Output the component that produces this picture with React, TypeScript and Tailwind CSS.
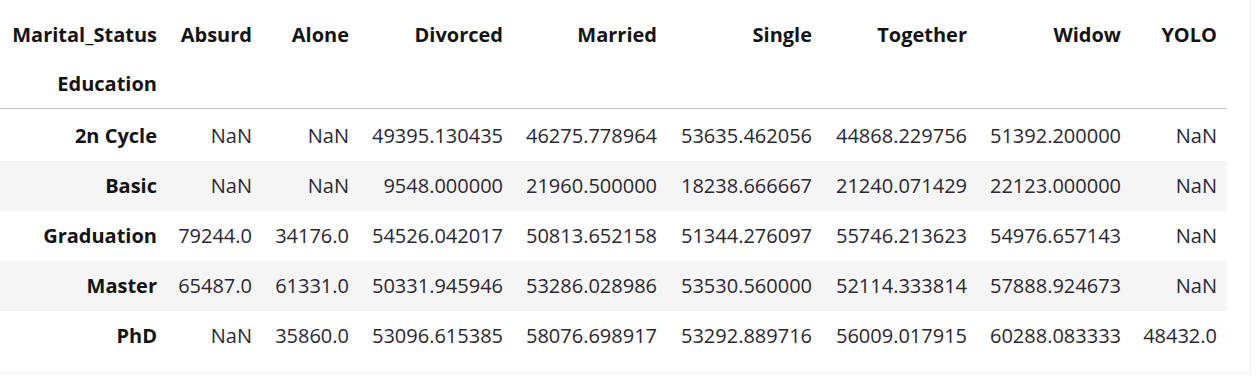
import React from "react";

const cols = ["Absurd", "Alone", "Divorced", "Married", "Single", "Together", "Widow", "YOLO"];

const rows: [string, string[]][] = [
  ["2n Cycle", ["NaN", "NaN", "49395.130435", "46275.778964", "53635.462056", "44868.229756", "51392.200000", "NaN"]],
  ["Basic", ["NaN", "NaN", "9548.000000", "21960.500000", "18238.666667", "21240.071429", "22123.000000", "NaN"]],
  ["Graduation", ["79244.0", "34176.0", "54526.042017", "50813.652158", "51344.276097", "55746.213623", "54976.657143", "NaN"]],
  ["Master", ["65487.0", "61331.0", "50331.945946", "53286.028986", "53530.560000", "52114.333814", "57888.924673", "NaN"]],
  ["PhD", ["NaN", "35860.0", "53096.615385", "58076.698917", "53292.889716", "56009.017915", "60288.083333", "48432.0"]],
];

const grid = "grid grid-cols-[167px_95px_97px_154px_154px_155px_155px_154px_96px] w-[1227px]";

export default function App() {
  return (
    <div
      className="w-[1251px] h-[373px] bg-white border-r border-b border-[#efefef] pt-[10px] text-[20px] leading-none"
      style={{ fontFamily: '"Open Sans", "Noto Sans", sans-serif' }}
    >
      <div className={`${grid} h-[50px] items-center font-bold text-[#141414]`}>
        <div className="text-right pr-[10px]">Marital_Status</div>
        {cols.map((c) => (
          <div key={c} className="text-right pr-[10px]">
            {c}
          </div>
        ))}
      </div>
      <div className={`${grid} h-[49px] items-center font-bold text-[#141414] border-b border-[#c4c4c4]`}>
        <div className="text-right pr-[10px]">Education</div>
      </div>
      <div className="mt-[2px]">
        {rows.map(([name, vals], i) => (
          <div
            key={name}
            className={`${grid} h-[50px] items-center ${i % 2 === 1 ? "bg-[#f5f5f5]" : "bg-white"}`}
          >
            <div className="text-right pr-[10px] font-bold text-[#141414]">{name}</div>
            {vals.map((v, j) => (
              <div key={j} className="text-right pr-[10px] text-[#2b2733]">
                {v}
              </div>
            ))}
          </div>
        ))}
      </div>
    </div>
  );
}
